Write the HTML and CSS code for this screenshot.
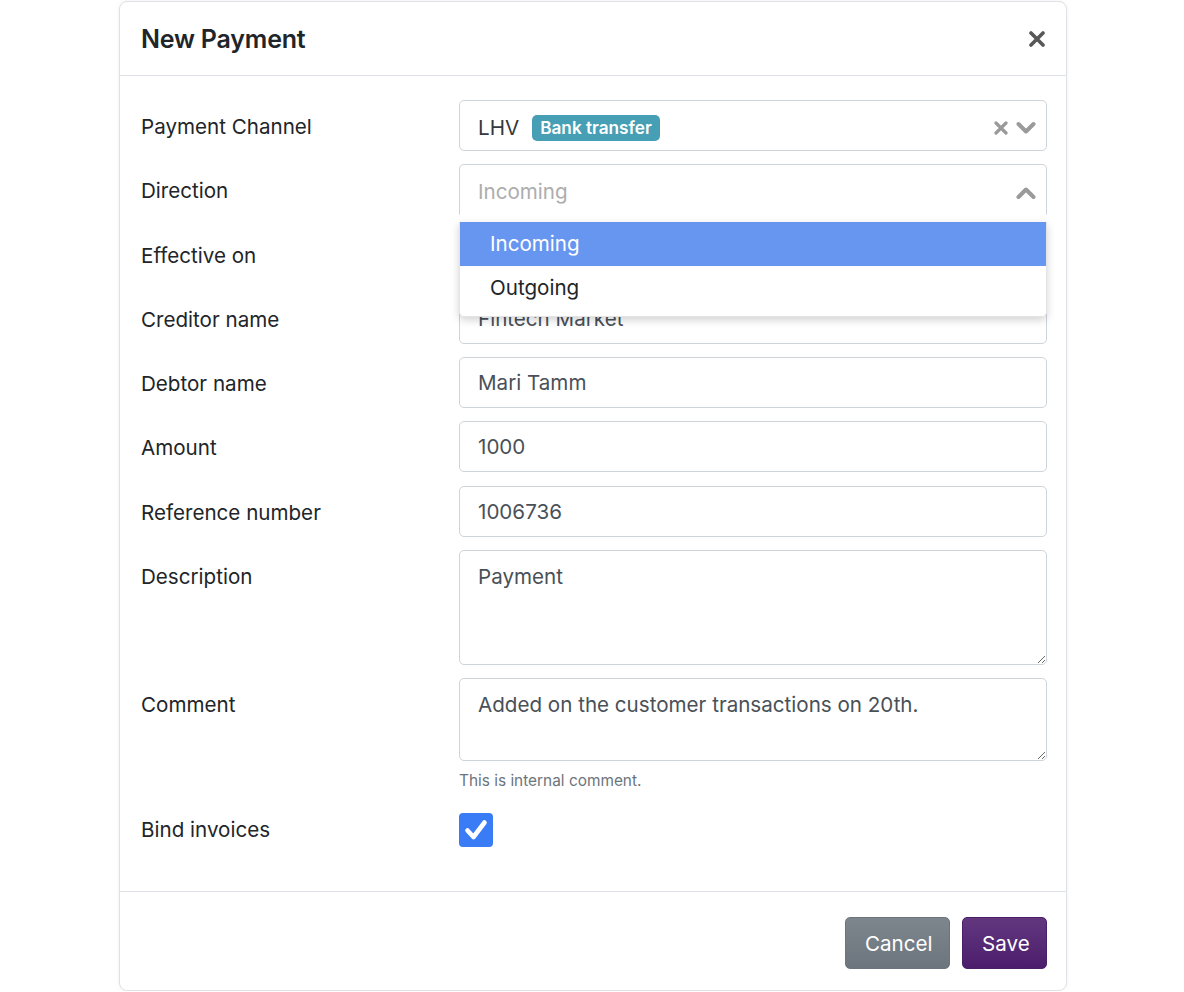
FILE: index.html
```html
<!DOCTYPE html>
<html lang="en">
<head>
<meta charset="utf-8">
<title>New Payment</title>
<link rel="stylesheet" href="styles.css">
</head>
<body>
<div class="modal">
  <div class="modal-header">
    <h5 class="modal-title">New Payment</h5>
    <button class="close" type="button" aria-label="Close">
      <svg width="16" height="16" viewBox="0 0 16 16"><path d="M2 2L14 14M14 2L2 14" stroke="#585858" stroke-width="3.6" stroke-linecap="round"/></svg>
    </button>
  </div>
  <div class="modal-body">
    <div class="form-row">
      <label class="lbl">Payment Channel</label>
      <div class="ms">
        <div class="ms-value"><span class="ms-text">LHV</span><span class="badge">Bank transfer</span></div>
        <div class="ms-icons">
          <svg width="14" height="14" viewBox="0 0 14 14"><path d="M2 2L12 12M12 2L2 12" stroke="#9a9a9a" stroke-width="3.2" stroke-linecap="round"/></svg>
          <svg width="20" height="14" viewBox="0 0 20 14"><path d="M2.5 3L10 10.5L17.5 3" fill="none" stroke="#9a9a9a" stroke-width="4" stroke-linecap="round" stroke-linejoin="round"/></svg>
        </div>
      </div>
    </div>
    <div class="form-row">
      <label class="lbl">Direction</label>
      <div class="ms ms-open">
        <div class="ms-value"><span class="ms-placeholder">Incoming</span></div>
        <div class="ms-icons">
          <svg width="20" height="14" viewBox="0 0 20 14"><path d="M2.5 11L10 3.5L17.5 11" fill="none" stroke="#9a9a9a" stroke-width="4" stroke-linecap="round" stroke-linejoin="round"/></svg>
        </div>
        <ul class="ms-list">
          <li class="ms-option ms-highlight">Incoming</li>
          <li class="ms-option">Outgoing</li>
        </ul>
      </div>
    </div>
    <div class="form-row">
      <label class="lbl">Effective on</label>
      <input class="form-control" type="text" value="20.05.2021">
    </div>
    <div class="form-row">
      <label class="lbl">Creditor name</label>
      <input class="form-control" type="text" value="Fintech Market">
    </div>
    <div class="form-row">
      <label class="lbl">Debtor name</label>
      <input class="form-control" type="text" value="Mari Tamm">
    </div>
    <div class="form-row">
      <label class="lbl">Amount</label>
      <input class="form-control" type="text" value="1000">
    </div>
    <div class="form-row">
      <label class="lbl">Reference number</label>
      <input class="form-control" type="text" value="1006736">
    </div>
    <div class="form-row">
      <label class="lbl">Description</label>
      <textarea class="form-control ta ta-desc">Payment</textarea>
    </div>
    <div class="form-row">
      <label class="lbl">Comment</label>
      <div class="field">
        <textarea class="form-control ta ta-comment">Added on the customer transactions on 20th.</textarea>
        <small class="help">This is internal comment.</small>
      </div>
    </div>
    <div class="form-row row-check">
      <label class="lbl">Bind invoices</label>
      <div class="checkbox">
        <svg width="34" height="34" viewBox="0 0 34 34"><rect x="0" y="0" width="34" height="34" rx="4" fill="#3a7cf5"/><path d="M8.5 17.5L14.5 24L25.5 9.5" fill="none" stroke="#fff" stroke-width="4.6" stroke-linecap="round" stroke-linejoin="round"/></svg>
      </div>
    </div>
  </div>
  <div class="modal-footer">
    <button class="btn btn-cancel" type="button">Cancel</button>
    <button class="btn btn-save" type="button">Save</button>
  </div>
</div>
</body>
</html>
```
FILE: styles.css
```css
* { box-sizing: border-box; }

html, body {
  margin: 0;
  padding: 0;
  background: #fff;
}

body {
  font-family: Inter, "Noto Sans", "Liberation Sans", sans-serif;
  font-size: 20.6px;
  color: #212529;
}

.modal {
  width: 948px;
  margin: 1px 0 0 119px;
  border: 1px solid #dee2e6;
  border-radius: 8px;
  background: #fff;
  box-shadow: 0 0 4px rgba(0, 0, 0, 0.06);
}

.modal-header {
  height: 74px;
  display: flex;
  align-items: center;
  justify-content: space-between;
  padding: 0 20px 0 21px;
  border-bottom: 1px solid #dee2e6;
}

.modal-title {
  margin: 0;
  font-size: 25px;
  font-weight: 600;
  color: #212529;
  letter-spacing: -0.2px;
}

.close {
  border: 0;
  background: transparent;
  padding: 0;
  margin-right: 1px;
  width: 16px;
  height: 16px;
  display: flex;
}

.modal-body {
  padding: 24px 19px 24px 21px;
}

.form-row {
  display: grid;
  grid-template-columns: 318px 1fr;
  margin-bottom: 13.25px;
}

.lbl {
  padding-top: 15px;
  line-height: 24px;
  font-size: 20.6px;
  color: #212529;
}

.form-control {
  display: block;
  width: 100%;
  height: 51px;
  margin: 0;
  padding: 0 18px;
  border: 1px solid #ced4da;
  border-radius: 5px;
  background: #fff;
  font-family: inherit;
  font-size: 20.6px;
  color: #495057;
  outline: none;
}

.ta {
  padding: 14px 18px;
  line-height: 24px;
  resize: vertical;
}

.ta-desc { height: 115px; }
.ta-comment { height: 83px; }

.help {
  display: block;
  margin-top: 11px;
  font-size: 15.4px;
  line-height: 18px;
  color: #6c757d;
}

/* multiselect */
.ms {
  position: relative;
  height: 51px;
  border: 1px solid #ced4da;
  border-radius: 5px;
  background: #fff;
  display: flex;
  align-items: center;
  justify-content: space-between;
  padding: 4px 10px 0 18px;
}

.ms-value {
  display: flex;
  align-items: center;
  gap: 13px;
}

.ms-text {
  color: #35383c;
  font-size: 20.6px;
}

.ms-placeholder {
  color: #adadad;
  font-size: 20.6px;
}

.badge {
  display: inline-block;
  background: #469fb4;
  color: #fff;
  font-size: 17.2px;
  font-weight: 600;
  line-height: 26px;
  padding: 0 8px;
  border-radius: 5px;
}

.ms-icons {
  display: flex;
  align-items: center;
  gap: 8px;
}

.ms-open {
  border-bottom-color: transparent;
  border-bottom-left-radius: 0;
  border-bottom-right-radius: 0;
}

.ms-open .ms-icons { margin-top: 2px; }

.ms-list {
  position: absolute;
  left: -1px;
  right: -1px;
  top: 57px;
  margin: 0;
  padding: 0 0 6px;
  list-style: none;
  background: #fff;
  border: 1px solid #e4e4e4;
  border-top: 0;
  border-radius: 0 0 5px 5px;
  box-shadow: 0 3px 8px rgba(0, 0, 0, 0.18);
  z-index: 10;
}

.ms-option {
  height: 44px;
  line-height: 44px;
  padding-left: 30px;
  font-size: 20.6px;
  color: #212529;
}

.ms-highlight {
  background: #6796f0;
  color: #fff;
}

.row-check {
  margin-top: 23px;
  margin-bottom: 20px;
}

.row-check .lbl { padding-top: 5px; }

.checkbox {
  display: flex;
  height: 34px;
}

.modal-footer {
  border-top: 1px solid #dee2e6;
  display: flex;
  justify-content: flex-end;
  gap: 12px;
  padding: 25px 19px 21px;
}

.btn {
  height: 52px;
  border-radius: 5px;
  font-family: inherit;
  font-size: 20.6px;
  color: #fff;
  padding: 0 19px;
  cursor: pointer;
}

.btn-cancel {
  width: 105px;
  background: linear-gradient(#7e868d, #6c757d);
  border: 1px solid #6c757d;
}

.btn-save {
  width: 85px;
  background: linear-gradient(#62377f, #4c1d6c);
  border: 1px solid #4a1f68;
}
```
